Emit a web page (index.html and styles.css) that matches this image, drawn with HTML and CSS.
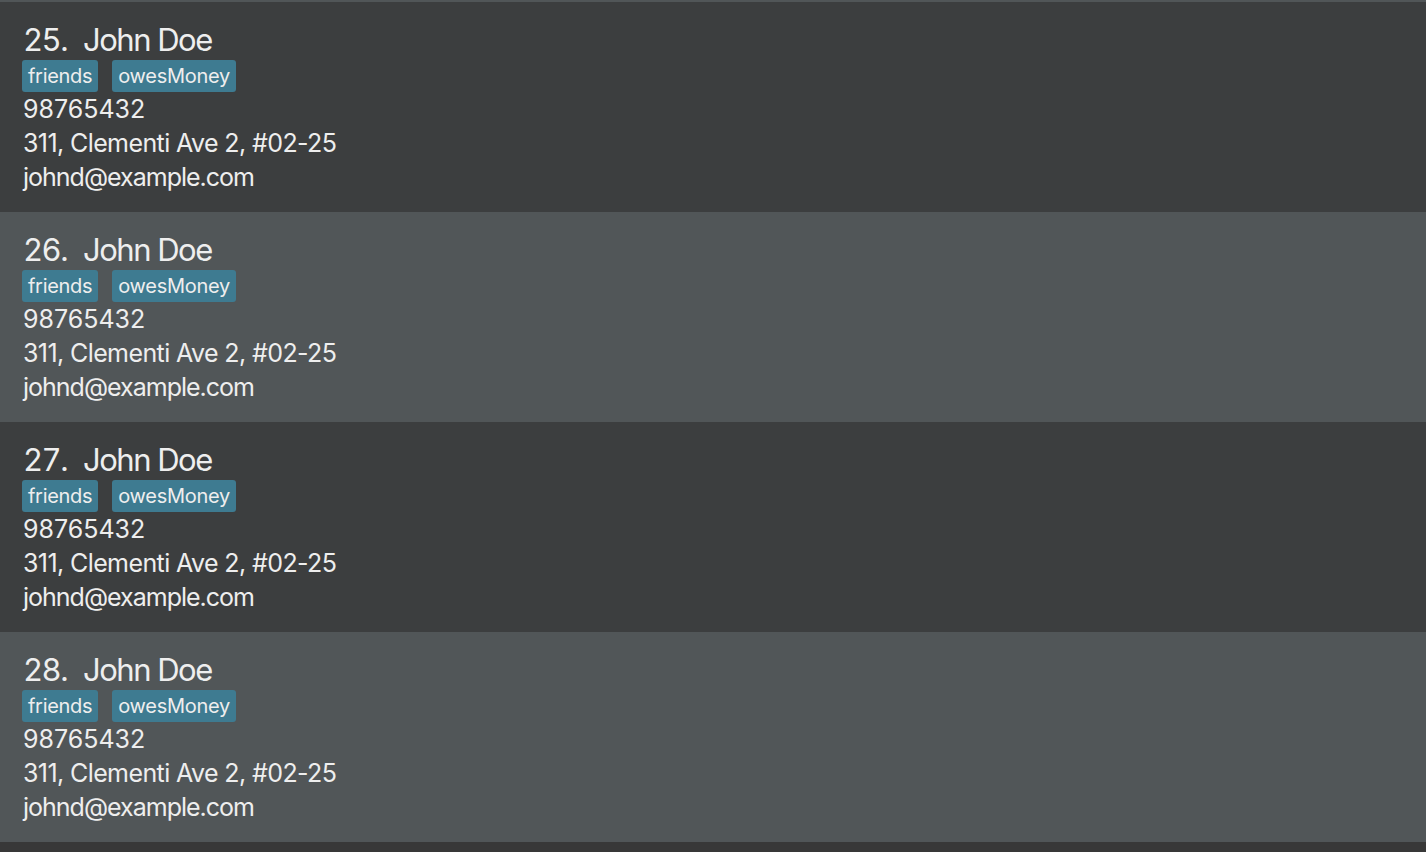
FILE: index.html
```html
<!DOCTYPE html>
<html>
<head>
<meta charset="utf-8">
<link rel="stylesheet" href="styles.css">
</head>
<body>
<div class="list">
  <div class="card-tail odd"></div>
  <div class="card even">
    <div class="name-row"><span class="id">25.</span><span class="name">John Doe</span></div>
    <div class="tags"><span class="tag">friends</span><span class="tag">owesMoney</span></div>
    <div class="detail phone">98765432</div>
    <div class="detail">311, Clementi Ave 2, #02-25</div>
    <div class="detail email">johnd@example.com</div>
  </div>
  <div class="card odd">
    <div class="name-row"><span class="id">26.</span><span class="name">John Doe</span></div>
    <div class="tags"><span class="tag">friends</span><span class="tag">owesMoney</span></div>
    <div class="detail phone">98765432</div>
    <div class="detail">311, Clementi Ave 2, #02-25</div>
    <div class="detail email">johnd@example.com</div>
  </div>
  <div class="card even">
    <div class="name-row"><span class="id">27.</span><span class="name">John Doe</span></div>
    <div class="tags"><span class="tag">friends</span><span class="tag">owesMoney</span></div>
    <div class="detail phone">98765432</div>
    <div class="detail">311, Clementi Ave 2, #02-25</div>
    <div class="detail email">johnd@example.com</div>
  </div>
  <div class="card odd">
    <div class="name-row"><span class="id">28.</span><span class="name">John Doe</span></div>
    <div class="tags"><span class="tag">friends</span><span class="tag">owesMoney</span></div>
    <div class="detail phone">98765432</div>
    <div class="detail">311, Clementi Ave 2, #02-25</div>
    <div class="detail email">johnd@example.com</div>
  </div>
</div>
</body>
</html>
```

FILE: styles.css
```css
html, body {
  margin: 0;
  padding: 0;
  height: 100%;
}
body {
  background: #383838;
  font-family: Inter, "Open Sans", sans-serif;
  color: #eeeeee;
  overflow: hidden;
}
.list {
  display: flex;
  flex-direction: column;
}
.card-tail {
  height: 2px;
}
.even {
  background: #3c3e3f;
}
.odd {
  background: #515658;
}
.card {
  height: 210px;
  box-sizing: border-box;
  padding: 18px 0 0 23px;
  display: flex;
  flex-direction: column;
}
.name-row {
  display: flex;
  gap: 16px;
  font-size: 31px;
  letter-spacing: -1.5px;
  line-height: 40px;
  height: 40px;
}
.id {
  font-variant-numeric: tabular-nums;
}
.tags {
  display: flex;
  gap: 14px;
  height: 32px;
  margin-left: -1px;
}
.tag {
  background: #3e7b91;
  border-radius: 3px;
  font-size: 20px;
  letter-spacing: -0.3px;
  line-height: 32px;
  padding: 0 6px;
}
.detail {
  font-size: 25px;
  letter-spacing: -0.6px;
  line-height: 34px;
  height: 34px;
}
.phone {
  letter-spacing: 0;
}
.email {
  letter-spacing: -1px;
}
```
